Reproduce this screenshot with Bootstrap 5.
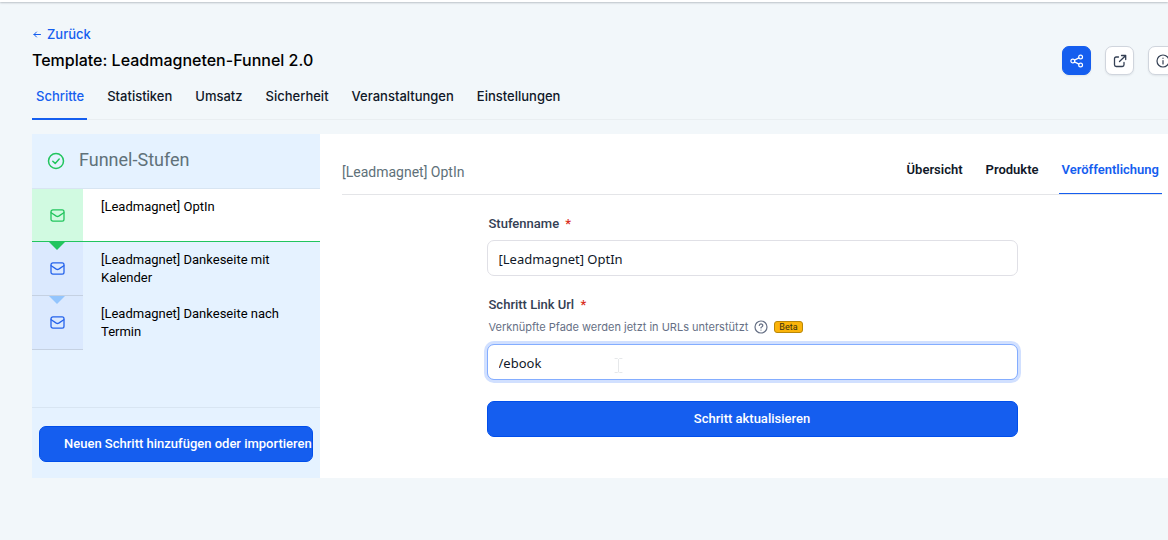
<!DOCTYPE html>
<html lang="de">
<head>
<meta charset="utf-8">
<meta name="viewport" content="width=device-width, initial-scale=1">
<title>Leadmagneten-Funnel 2.0</title>
<link href="https://cdn.jsdelivr.net/npm/bootstrap@5.3.0/dist/css/bootstrap.min.css" rel="stylesheet">
<style>
  :root { --brand: #155eef; --brand-edge: #004eeb; --go: #22c55e; --muted: #607179; }
  body { background: #f2f7fa; color: #101828; font: 13px/18px Roboto, "Liberation Sans", sans-serif; overflow-x: hidden; }
  svg { fill: none; stroke: currentColor; stroke-linecap: round; stroke-linejoin: round; flex: none; }
  a { text-decoration: none; }
  .topline { height: 2px; background: #fff; box-shadow: 0 1px 2px rgba(16, 24, 40, .25); }

  .page-head { font-family: Inter, sans-serif; padding: 23px 0 0 32px; }
  .back-link { color: var(--brand); font-weight: 500; gap: 5px; }
  .page-title { font-size: 16px; line-height: 24px; font-weight: 500; color: #000; margin: 5px 0 3px; }
  .head-actions { gap: 14px; margin-right: -9px; }
  .icon-btn { width: 29px; height: 29px; padding: 0; border-radius: 7px; color: #344054; background: #fff; border: 1px solid #d0d5dd; box-shadow: 0 1px 2px rgba(16, 24, 40, .08); }
  .icon-btn.primary { color: #fff; background: var(--brand); border-color: var(--brand); }

  .page-tabs { gap: 16px; margin-top: 11px; border-bottom: 1px solid #e9eef1; }
  .page-tabs .nav-link { padding: 0 3px 12px 4px; line-height: 20px; font-weight: 450; color: #101828; border-bottom: 2px solid transparent; margin-bottom: -1px; }
  .page-tabs .nav-link.active { color: var(--brand); border-color: var(--brand); }

  .workspace { margin: 14px 0 0 32px; min-height: 344px; background: #fff; }
  .stages { width: 288px; background: #e5f2ff; flex: none; }
  .stages-head { height: 55px; padding: 0 15px; gap: 14px; border-bottom: 1px solid #d8e5f2; color: var(--muted); }
  .stages-head svg { color: var(--go); }
  .stages-head h2 { font-size: 18px; line-height: 24px; font-weight: 400; margin: 0; padding-bottom: 2px; }
  .stage { color: #000; min-height: 54px; }
  .stage-icon { width: 51px; background: #dbe9fe; color: #2563eb; border-bottom: 1px solid #c5d1e2; }
  .stage-text { padding: 9px 24px 8px 18px; }
  .stage.current { min-height: 53px; background: #fff; border-bottom: 1px solid var(--go); }
  .stage.current .stage-icon { background: #d1fae1; color: var(--go); border-bottom: 0; }
  .stage-icon .pointer { position: absolute; top: 0; left: 17px; border: 8px solid transparent; border-bottom: 0; border-top-color: #93c5fd; }
  .stage-icon .pointer.done { border-top-color: var(--go); }
  .stages-foot { border-top: 1px solid #d8e5f2; padding: 18px 7px 16px; }

  .main-btn { height: 36px; padding: 0; border-radius: 7px; color: #fff; background: var(--brand); border: 1px solid var(--brand-edge); font-size: 13px; line-height: 18px; font-weight: 500; }
  .main-btn:hover, .icon-btn.primary:hover { color: #fff; background: var(--brand-edge); }
  .add-btn { padding: 0 5px 0 24px; white-space: nowrap; }

  .detail { padding: 25px 6px 0 22px; min-width: 0; }
  .detail-head { border-bottom: 1px solid #e4e5e8; }
  .detail-head h3 { font-size: 14px; line-height: 20px; font-weight: 400; color: var(--muted); margin: 3px 0 0; }
  .detail-tabs { gap: 17px; }
  .detail-tabs .nav-link { padding: 2px 3px 14px; font-weight: 600; line-height: 18px; color: #101828; border-bottom: 1px solid transparent; }
  .detail-tabs .nav-link.active { color: var(--brand); border-color: var(--brand); }

  .step-form { max-width: 531px; padding-top: 20px; }
  .step-form label { padding-left: 2px; line-height: 18px; font-weight: 500; color: #344054; }
  .step-form .name-label { margin-bottom: 7px; }
  .req { color: #d92d20; margin-left: 3px; }
  .step-form .form-control { height: 36px; padding: 1px 11px 0; font: 13px/20px "Noto Sans", sans-serif; color: #101828; border: 1px solid #e0e0e6; border-radius: 7px; }
  .step-form .form-control.lit { border-color: #84adff; box-shadow: 0 0 0 3px #d1e0ff; }
  .caret-mark { position: absolute; left: 25%; top: 13px; margin-left: -5px; color: #e6e8ea; pointer-events: none; }
  .hint { padding-left: 2px; gap: 6px; font: 11px/18px Inter, sans-serif; color: #667085; }
  .beta { height: 12px; padding: 0 4px; font: 400 9px/10px Roboto, sans-serif; color: #3a3210; background: #fbb40a; border: 1px solid #b98708; border-radius: 3px; }
  .save-btn { margin-top: 21px; }
</style>
</head>
<body>
<div class="topline"></div>

<header class="page-head">
  <div class="d-flex justify-content-between">
    <div>
      <a href="#" class="back-link d-flex align-items-center">
        <svg width="10" height="10" viewBox="0 0 10 10"><path d="M8.500 5.500H2M4.500 3 2 5.500 4.500 8"/></svg>Zurück</a>
      <h1 class="page-title">Template: Leadmagneten-Funnel 2.0</h1>
    </div>
    <div class="head-actions d-flex align-self-end">
      <button type="button" class="btn icon-btn primary d-flex align-items-center justify-content-center" aria-label="Teilen">
        <svg width="14" height="14" viewBox="0 0 14 14" stroke-width="1.200"><circle cx="2.800" cy="7" r="1.900"/><circle cx="10.600" cy="3" r="1.900"/><circle cx="10.600" cy="11" r="1.900"/><path d="M4.500 6.100 8.900 3.900M4.500 7.900 8.900 10.100"/></svg>
      </button>
      <button type="button" class="btn icon-btn d-flex align-items-center justify-content-center" aria-label="Öffnen">
        <svg width="14" height="14" viewBox="0 0 14 14" stroke-width="1.300"><path d="M5.500 3H3.200Q1.500 3 1.500 4.700V10.800Q1.500 12.500 3.200 12.500H9.300Q11 12.500 11 10.800V8.500M8.500 1.500H12.700V5.500M12.500 1.700 6.500 7.500"/></svg>
      </button>
      <button type="button" class="btn icon-btn d-flex align-items-center justify-content-center" aria-label="Info">
        <svg width="14" height="14" viewBox="0 0 14 14" stroke-width="1.200"><circle cx="7" cy="7" r="6"/><path d="M7 6.500V10M7 4.200V4.300"/></svg>
      </button>
    </div>
  </div>
  <nav class="nav page-tabs" aria-label="Funnel">
    <a class="nav-link active" href="#">Schritte</a>
    <a class="nav-link" href="#">Statistiken</a>
    <a class="nav-link" href="#">Umsatz</a>
    <a class="nav-link" href="#">Sicherheit</a>
    <a class="nav-link" href="#">Veranstaltungen</a>
    <a class="nav-link" href="#">Einstellungen</a>
  </nav>
</header>

<div class="workspace d-flex">
  <aside class="stages d-flex flex-column">
    <div class="stages-head d-flex align-items-center">
      <svg width="18" height="18" viewBox="0 0 18 18" stroke-width="1.500"><circle cx="9" cy="9" r="7.500"/><path d="M5.800 9.200 8.200 11.400 12.200 7"/></svg>
      <h2>Funnel-Stufen</h2>
    </div>
    <a href="#" class="stage current d-flex">
      <span class="stage-icon d-flex align-items-center justify-content-center flex-shrink-0">
        <svg width="15" height="13" viewBox="0 0 16 14" stroke-width="1.400"><rect x="1" y="1" width="14" height="12" rx="2"/><path d="M1.200 4 6.700 7.700Q8 8.500 9.300 7.700L14.800 4"/></svg>
      </span>
      <span class="stage-text">[Leadmagnet] OptIn</span>
    </a>
    <a href="#" class="stage d-flex">
      <span class="stage-icon position-relative d-flex align-items-center justify-content-center flex-shrink-0">
        <i class="pointer done"></i>
        <svg width="15" height="13" viewBox="0 0 16 14" stroke-width="1.400"><rect x="1" y="1" width="14" height="12" rx="2"/><path d="M1.200 4 6.700 7.700Q8 8.500 9.300 7.700L14.800 4"/></svg>
      </span>
      <span class="stage-text">[Leadmagnet] Dankeseite mit Kalender</span>
    </a>
    <a href="#" class="stage d-flex">
      <span class="stage-icon position-relative d-flex align-items-center justify-content-center flex-shrink-0">
        <i class="pointer"></i>
        <svg width="15" height="13" viewBox="0 0 16 14" stroke-width="1.400"><rect x="1" y="1" width="14" height="12" rx="2"/><path d="M1.200 4 6.700 7.700Q8 8.500 9.300 7.700L14.800 4"/></svg>
      </span>
      <span class="stage-text">[Leadmagnet] Dankeseite nach Termin</span>
    </a>
    <div class="stages-foot mt-auto">
      <button type="button" class="btn main-btn add-btn w-100">Neuen Schritt hinzufügen oder importieren</button>
    </div>
  </aside>

  <main class="detail flex-grow-1">
    <div class="detail-head d-flex justify-content-between">
      <h3>[Leadmagnet] OptIn</h3>
      <nav class="nav detail-tabs" aria-label="Stufe">
        <a class="nav-link" href="#">Übersicht</a>
        <a class="nav-link" href="#">Produkte</a>
        <a class="nav-link active" href="#">Veröffentlichung</a>
      </nav>
    </div>
    <form class="step-form mx-auto">
      <label class="name-label d-block" for="stage-name">Stufenname <span class="req">*</span></label>
      <input id="stage-name" type="text" class="form-control" value="[Leadmagnet] OptIn">
      <label class="d-block mt-3 pt-1" for="stage-url">Schritt Link Url <span class="req">*</span></label>
      <div class="hint d-flex align-items-center mt-1">
        <span>Verknüpfte Pfade werden jetzt in URLs unterstützt</span>
        <svg width="14" height="14" viewBox="0 0 14 14" stroke-width="1.200"><circle cx="7" cy="7" r="6"/><path d="M5.300 5.500Q5.500 3.800 7.100 3.800 8.800 3.900 8.800 5.500 8.800 6.600 7 7.500V8M7 10V10.100"/></svg>
        <span class="beta">Beta</span>
      </div>
      <div class="position-relative mt-2">
        <input id="stage-url" type="text" class="form-control lit" value="/ebook">
        <svg class="caret-mark" width="9" height="17" viewBox="0 0 9 17" aria-hidden="true"><path d="M1 1.500H3.500L4.500 2.500 5.500 1.500H8M4.500 2.500V15M1 15.500H3.500L4.500 14.500 5.500 15.500H8"/></svg>
      </div>
      <button type="button" class="btn main-btn save-btn w-100">Schritt aktualisieren</button>
    </form>
  </main>
</div>
<script src="https://cdn.jsdelivr.net/npm/bootstrap@5.3.0/dist/js/bootstrap.bundle.min.js"></script>
</body>
</html>
